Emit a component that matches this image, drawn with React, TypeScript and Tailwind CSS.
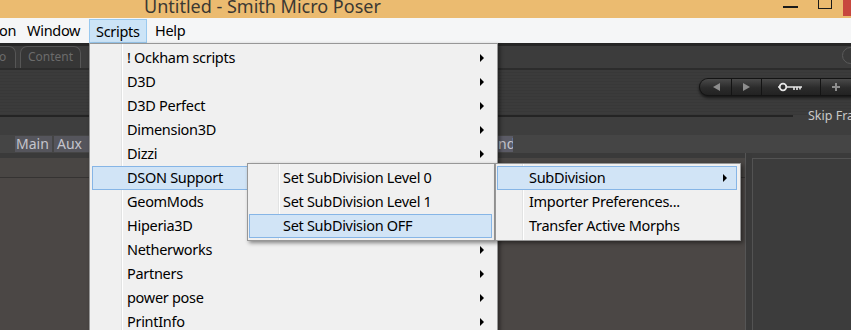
import React from "react";

const mainItems = [
  "! Ockham scripts",
  "D3D",
  "D3D Perfect",
  "Dimension3D",
  "Dizzi",
  "DSON Support",
  "GeomMods",
  "Hiperia3D",
  "Netherworks",
  "Partners",
  "power pose",
  "PrintInfo",
  "Shaders",
];

function Arrow() {
  return <div className="w-0 h-0 border-y-[4px] border-y-transparent border-l-[4px] border-l-black" />;
}

function MenuItem({
  label,
  hl,
  arrow,
  pl,
  pr,
  ml,
  mr,
}: {
  label: string;
  hl?: boolean;
  arrow?: boolean;
  pl: string;
  pr: string;
  ml: string;
  mr: string;
}) {
  return (
    <div
      className={`flex items-center h-[24px] ${ml} ${mr} ${pl} ${pr} whitespace-nowrap ${
        hl ? "bg-[#d1e4f6] outline outline-1 -outline-offset-1 outline-[#86b5e6]" : ""
      }`}
    >
      <span className="flex-1">{label}</span>
      {arrow && <Arrow />}
    </div>
  );
}

export default function App() {
  return (
    <div className="relative w-[851px] h-[330px] overflow-hidden bg-[#3b3b3b] font-['Noto_Sans',sans-serif]">
      {/* Title bar */}
      <div className="flex h-[18px] bg-[#ebbb70] overflow-hidden">
        <div className="pl-[144px] -mt-[5px] text-[18px] leading-[22px] text-[#3b3833] whitespace-nowrap">
          Untitled - Smith Micro Poser
        </div>
        <div className="ml-auto flex items-start">
          <div className="mt-[6px] w-[15px] h-[2px] bg-[#1a1a1a] mr-[20px]" />
          <div className="w-[14px] h-[9px] border border-[#1a1a1a] border-t-0 mr-[11px]" />
          <div className="w-[8px] h-[16px] bg-[#c7473e]" />
        </div>
      </div>

      {/* Menu bar */}
      <div className="flex h-[25px] bg-[#f5f6f7] text-[14.5px] tracking-[-0.3px] leading-[25px] text-black whitespace-nowrap">
        <div className="w-[28px] -ml-[1px]">on</div>
        <div className="w-[62px]">Window</div>
        <div className="w-[58px] h-[24px] mt-[1px] bg-[#cce4f7] border border-[#99c9ef] pl-[6px] leading-[22px]">
          Scripts
        </div>
        <div className="pl-[8px]">Help</div>
      </div>

      {/* Row A: tabs */}
      <div className="flex items-end h-[27px] bg-[#3c3c3c] border-t-[3px] border-t-[#262626] border-b-2 border-b-[#2c2c2c]">
        <div className="flex items-end h-full gap-[4px] -ml-[10px]">
          <div className="h-[22px] w-[26px] rounded-t-[7px] border border-b-0 border-[#565656] bg-[#363636] text-[12px] leading-[20px] text-[#6b6b6b] pl-[8px]">
            o
          </div>
          <div className="h-[22px] w-[61px] rounded-t-[7px] border border-b-0 border-[#565656] bg-[#363636] text-[12px] leading-[20px] text-[#6b6b6b] pl-[7px]">
            Content
          </div>
        </div>
        <div className="ml-auto -mr-[8px] mb-[4px] w-[17px] h-[17px] rounded-full border border-[#5a5a5a] bg-[#3a3a3a]" />
      </div>

      {/* Row B: toolbar */}
      <div className="flex items-start h-[45px] pt-[8px] pl-[699px] bg-[repeating-linear-gradient(to_bottom,#3b3b3b_0px,#3b3b3b_2px,#383838_2px,#383838_3px)]">
        <div className="flex h-[18px] shrink-0 rounded-l-full bg-[#141414] p-[1px] gap-[1px] shadow-[0_2px_3px_rgba(0,0,0,0.6)]">
          <div className="w-[31px] h-full rounded-l-full bg-[linear-gradient(to_bottom,#4a4a4a,#2b2b2b_55%,#222)] flex items-center justify-center">
            <div className="w-0 h-0 border-y-[4px] border-y-transparent border-r-[7px] border-r-[#8d8d8d] ml-[2px]" />
          </div>
          <div className="w-[29px] h-full bg-[linear-gradient(to_bottom,#4a4a4a,#2b2b2b_55%,#222)] flex items-center justify-center">
            <div className="w-0 h-0 border-y-[4px] border-y-transparent border-l-[7px] border-l-[#8d8d8d]" />
          </div>
          <div className="w-[58px] h-full bg-[linear-gradient(to_bottom,#4a4a4a,#2b2b2b_55%,#222)] flex items-center justify-center">
            <svg width="28" height="10" viewBox="0 0 28 10">
              <circle cx="6" cy="5" r="3.3" fill="none" stroke="#e6e6e6" strokeWidth="1.8" />
              <path d="M9.5 5H25M17 5v3M20 5v3M23 5v2.5" stroke="#e6e6e6" strokeWidth="1.6" fill="none" />
              <path d="M1 5h1.5" stroke="#e6e6e6" strokeWidth="1.4" />
            </svg>
          </div>
          <div className="w-[40px] h-full bg-[linear-gradient(to_bottom,#4a4a4a,#2b2b2b_55%,#222)] flex items-center pl-[10px]">
            <svg width="10" height="10" viewBox="0 0 10 10">
              <path d="M5 1v8M1 5h8" stroke="#8d8d8d" strokeWidth="2" />
            </svg>
          </div>
        </div>
      </div>

      {/* Row B2: separator + Skip Frames */}
      <div className="flex h-[20px] bg-[#3e3e3e]">
        <div className="w-[793px] h-[2px] bg-[#242424] shrink-0" />
        <div className="pl-[15px] -mt-[6px] text-[12.5px] leading-[14px] text-[#c9c9c9] whitespace-nowrap">Skip Frames</div>
      </div>

      {/* Row D: Main / Aux tabs */}
      <div className="flex h-[18px] bg-[#454545] text-[14px] leading-[16px] text-[#c4c4cc]">
        <div className="ml-[15px] mt-[1px] h-[16px] w-[37px] bg-[#55555c] pl-[1px]">Main</div>
        <div className="ml-[2px] mt-[1px] h-[16px] w-[40px] bg-[#55555c] pl-[3px]">Aux</div>
        <div className="ml-[403px] mt-[1px] h-[16px] w-[16px] bg-[#5b5b66] pl-[1px] overflow-hidden whitespace-nowrap">nd</div>
      </div>

      {/* Row E: content */}
      <div className="flex h-[177px]">
        <div className="w-[745px] flex flex-col">
          <div className="h-[5px] bg-[#3a3a3a]" />
          <div className="h-[19px] bg-[#494644]" />
          <div className="h-[1px] bg-[#353332]" />
          <div className="flex-1 bg-[#4b4745]" />
        </div>
        <div className="w-[7px] bg-[#3a3a3a] border-l border-[#555]" />
        <div className="flex-1 mt-[5px] bg-[#3c3c3c] border-l border-t border-[#535353]" />
      </div>

      {/* Main dropdown */}
      <div className="absolute left-[89px] top-[43px] w-[409px] h-[300px] border border-[#979797] pt-[2px] text-[14.5px] tracking-[-0.3px] text-black bg-[linear-gradient(to_right,#f0f0f0_31px,#e2e3e3_31px,#e2e3e3_32px,#ffffff_32px,#ffffff_33px,#f0f0f0_33px)] shadow-[2px_2px_4px_rgba(0,0,0,0.45)]">
        {mainItems.map((m, i) => (
          <MenuItem key={m} label={m} hl={i === 5} arrow ml="ml-[2px]" mr="mr-[2px]" pl="pl-[35px]" pr="pr-[11px]" />
        ))}
      </div>

      {/* Submenu 1 */}
      <div className="absolute left-[247px] top-[163px] w-[248px] border border-[#979797] py-[2px] text-[14.5px] tracking-[-0.3px] text-black bg-[linear-gradient(to_right,#f0f0f0_30px,#e2e3e3_30px,#e2e3e3_31px,#ffffff_31px,#ffffff_32px,#f0f0f0_32px)] shadow-[2px_2px_4px_rgba(0,0,0,0.45)]">
        <MenuItem label="Set SubDivision Level 0" ml="ml-[1px]" mr="mr-[2px]" pl="pl-[34px]" pr="pr-[10px]" />
        <MenuItem label="Set SubDivision Level 1" ml="ml-[1px]" mr="mr-[2px]" pl="pl-[34px]" pr="pr-[10px]" />
        <MenuItem label="Set SubDivision OFF" hl ml="ml-[1px]" mr="mr-[2px]" pl="pl-[34px]" pr="pr-[10px]" />
      </div>

      {/* Submenu 2 */}
      <div className="absolute left-[495px] top-[163px] w-[246px] border border-[#979797] py-[2px] text-[14.5px] tracking-[-0.3px] text-black bg-[linear-gradient(to_right,#f0f0f0_26px,#e2e3e3_26px,#e2e3e3_27px,#ffffff_27px,#ffffff_28px,#f0f0f0_28px)] shadow-[2px_2px_4px_rgba(0,0,0,0.45)]">
        <MenuItem label="SubDivision" hl arrow ml="ml-[1px]" mr="mr-[3px]" pl="pl-[32px]" pr="pr-[10px]" />
        <MenuItem label="Importer Preferences..." ml="ml-[1px]" mr="mr-[3px]" pl="pl-[32px]" pr="pr-[10px]" />
        <MenuItem label="Transfer Active Morphs" ml="ml-[1px]" mr="mr-[3px]" pl="pl-[32px]" pr="pr-[10px]" />
      </div>
    </div>
  );
}
